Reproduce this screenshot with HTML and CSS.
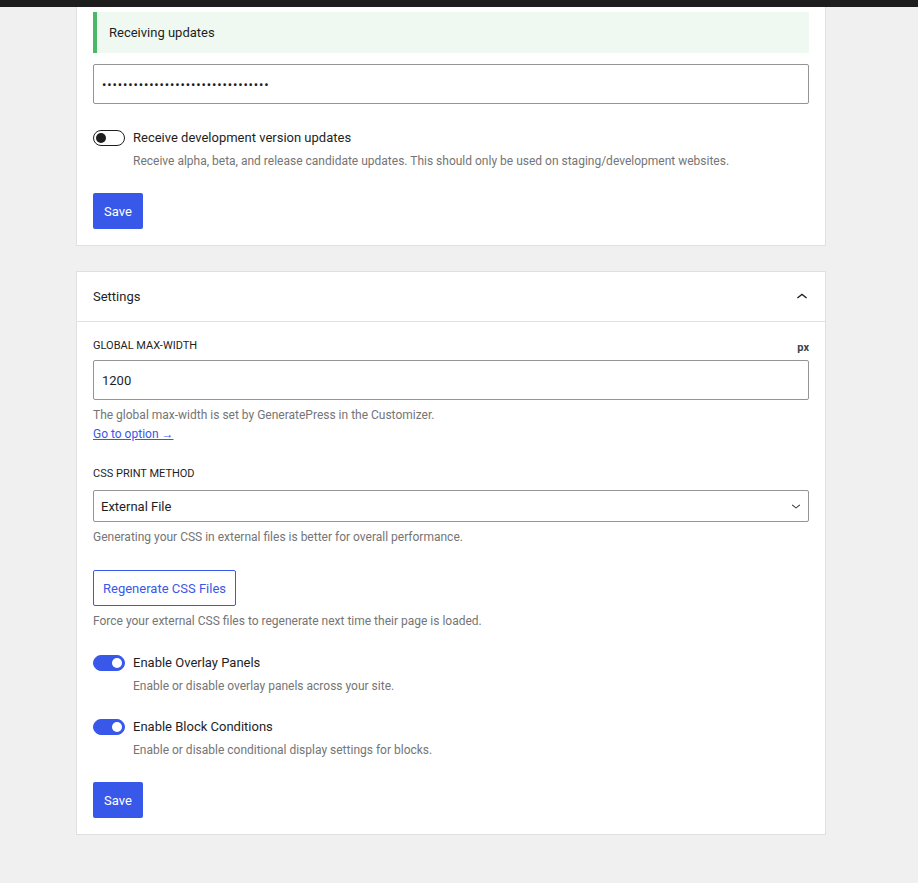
FILE: index.html
```html
<!DOCTYPE html>
<html lang="en">
<head>
  <meta charset="UTF-8" />
  <meta name="viewport" content="width=device-width, initial-scale=1.0"/>
  <title>GenerateBlocks Settings</title>
  <link rel="stylesheet" href="styles.css">
</head>
<body>

  <div class="topbar"></div>

  <div class="wrap">

    <section class="panel panel-license">
      <div class="notice">Receiving updates</div>
      <input class="text-input" type="password" value="••••••••••••••••••••••••••••••••" />

      <div class="toggle-row">
        <span class="toggle"><span class="knob"></span></span>
        <div class="toggle-text">
          <div class="toggle-label">Receive development version updates</div>
          <p class="help">Receive alpha, beta, and release candidate updates. This should only be used on staging/development websites.</p>
        </div>
      </div>

      <button class="btn-save">Save</button>
    </section>

    <section class="panel panel-settings">
      <div class="panel-head">
        <span>Settings</span>
        <svg class="chevron" width="24" height="24" viewBox="0 0 24 24"><path d="M7 12.6 12 8.6l5 4-.8 1L12 10.3l-4.2 3.3z" fill="#1e1e1e"/></svg>
      </div>

      <div class="panel-body">
        <div class="field-head">
          <label class="field-label">Global max-width</label>
          <span class="unit">px</span>
        </div>
        <input class="text-input" type="text" value="1200" />
        <p class="help help-field">The global max-width is set by GeneratePress in the Customizer.<br><a href="#">Go to option →</a></p>

        <label class="field-label label-select">CSS Print Method</label>
        <div class="select">
          <span>External File</span>
          <svg width="16" height="16" viewBox="0 0 16 16"><path d="M4.5 6.6 8 9.4l3.5-2.8.6.7L8 10.6 3.9 7.3z" fill="#1e1e1e"/></svg>
        </div>
        <p class="help help-field help-select">Generating your CSS in external files is better for overall performance.</p>

        <button class="btn-outline">Regenerate CSS Files</button>
        <p class="help help-field">Force your external CSS files to regenerate next time their page is loaded.</p>

        <div class="toggle-row row-first">
          <span class="toggle on"><span class="knob"></span></span>
          <div class="toggle-text">
            <div class="toggle-label">Enable Overlay Panels</div>
            <p class="help">Enable or disable overlay panels across your site.</p>
          </div>
        </div>

        <div class="toggle-row row-next">
          <span class="toggle on"><span class="knob"></span></span>
          <div class="toggle-text">
            <div class="toggle-label">Enable Block Conditions</div>
            <p class="help">Enable or disable conditional display settings for blocks.</p>
          </div>
        </div>

        <button class="btn-save">Save</button>
      </div>
    </section>

  </div>

</body>
</html>
```

FILE: styles.css
```css
body {
  font-family: Roboto, 'Noto Sans', sans-serif;
  margin: 0;
  background-color: #f0f0f0;
  color: #1e1e1e;
  font-size: 13px;
}

.topbar {
  height: 7px;
  background-color: #1d1d1d;
}

.wrap {
  width: 750px;
  margin-left: 76px;
  padding-bottom: 48px;
}

.panel {
  background: #fff;
  border: 1px solid #e0e0e0;
  box-sizing: border-box;
}

.panel-license {
  border-top: none;
  padding: 5px 16px 16px;
}

.notice {
  background-color: #eff9f1;
  border-left: 4px solid #4ab866;
  height: 41px;
  line-height: 42px;
  padding-left: 12px;
  margin-bottom: 11px;
}

.text-input {
  display: block;
  width: 100%;
  height: 40px;
  box-sizing: border-box;
  border: 1px solid #949494;
  border-radius: 2px;
  padding: 0 8px;
  font-family: inherit;
  font-size: 13px;
  color: #1e1e1e;
}

.panel-license .text-input {
  letter-spacing: 0.85px;
}

.toggle-row {
  display: flex;
  gap: 8px;
  margin-top: 25px;
}

.toggle {
  flex: none;
  width: 32px;
  height: 16px;
  border: 1px solid #1e1e1e;
  border-radius: 9px;
  box-sizing: border-box;
  position: relative;
  margin-top: 1px;
  background: #fff;
}

.toggle .knob {
  position: absolute;
  top: 2px;
  left: 2px;
  width: 10px;
  height: 10px;
  border-radius: 50%;
  background: #1e1e1e;
}

.toggle.on {
  background: #3858e9;
  border-color: #3858e9;
}

.toggle.on .knob {
  left: auto;
  right: 2px;
  background: #fff;
}

.toggle-label {
  line-height: 18px;
}

.help {
  margin: 5px 0 0;
  font-size: 12px;
  line-height: 18px;
  color: #757575;
}

.help a {
  color: #3858e9;
}

.btn-save {
  display: block;
  background-color: #3858e9;
  color: #fff;
  border: none;
  border-radius: 2px;
  height: 36px;
  padding: 0 11px;
  font-family: inherit;
  font-size: 13px;
  margin-top: 23px;
  cursor: pointer;
}

.panel-settings {
  margin-top: 25px;
}

.panel-head {
  height: 49px;
  border-bottom: 1px solid #e0e0e0;
  display: flex;
  align-items: center;
  justify-content: space-between;
  padding: 0 16px;
  font-size: 13px;
}

.panel-head .chevron {
  margin-right: -5px;
}

.panel-body {
  padding: 16px;
}

.field-head {
  display: flex;
  justify-content: space-between;
  align-items: center;
  margin-bottom: 6px;
}

.field-label {
  display: block;
  font-size: 11px;
  text-transform: uppercase;
  line-height: 14px;
}

.unit {
  font-size: 11px;
  font-weight: bold;
  line-height: 12px;
  margin-top: 4px;
  color: #3c434a;
}

.help-field {
  margin-top: 6px;
  line-height: 19px;
}

.label-select {
  margin-top: 23px;
  margin-bottom: 9px;
}

.select {
  height: 32px;
  border: 1px solid #949494;
  border-radius: 2px;
  box-sizing: border-box;
  display: flex;
  align-items: center;
  justify-content: space-between;
  padding: 0 4px 0 7px;
}

.help-select {
  margin-top: 6px;
}

.btn-outline {
  display: block;
  background: #fff;
  color: #3858e9;
  border: 1px solid #3858e9;
  border-radius: 2px;
  height: 36px;
  padding: 0 9px;
  font-family: inherit;
  font-size: 13px;
  margin-top: 23px;
}

.row-first {
  margin-top: 23px;
}

.row-next {
  margin-top: 23px;
}
```
